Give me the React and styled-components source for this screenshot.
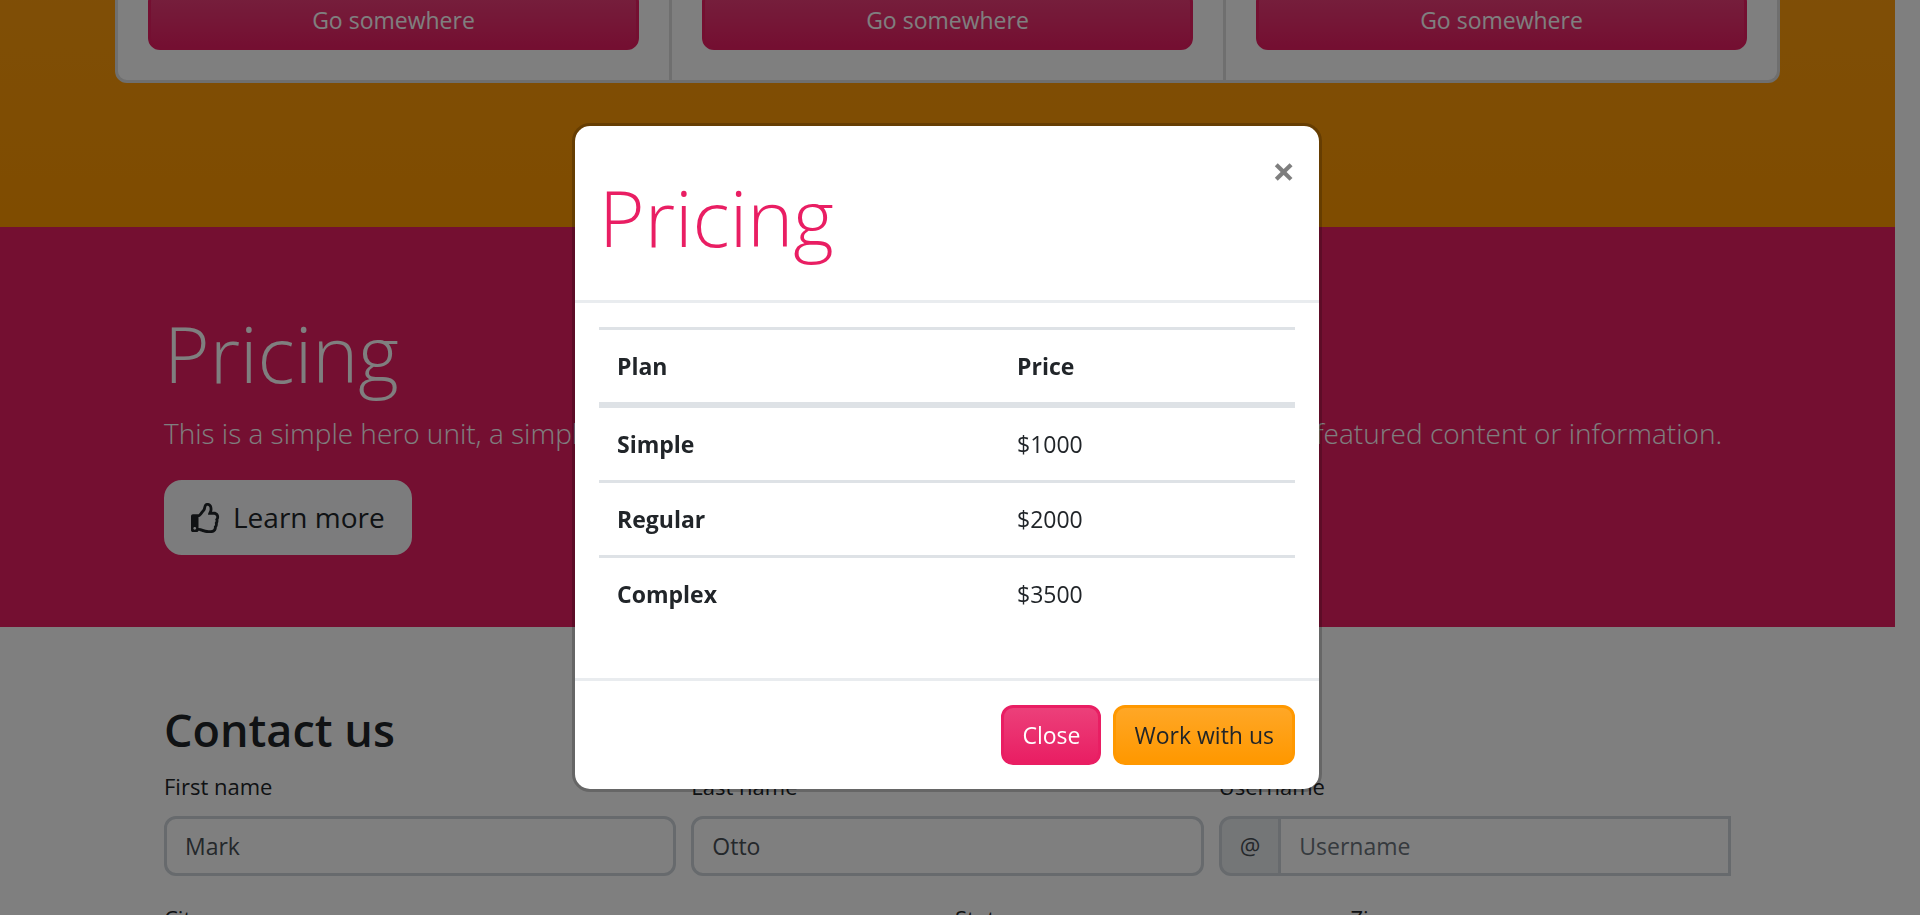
import React from "react";
import styled, { createGlobalStyle, css } from "styled-components";
import { FaRegThumbsUp } from "react-icons/fa";

const GlobalStyle = createGlobalStyle`
  *, *::before, *::after { box-sizing: border-box; }
  body {
    margin: 0;
    overflow: hidden;
    background: #fff;
    color: #212529;
    font-family: "Segoe UI", "Open Sans", "Noto Sans", sans-serif;
    font-size: 23px;
    line-height: 36px;
  }
  h1, h2, p { margin: 0; }
  button, input { font: inherit; }
`;

/* The page sits scrolled part-way through the features section. */
const Page = styled.div`
  margin-top: -43px;
  padding-right: 25px;
`;

const Features = styled.section`
  padding-bottom: 144px;
  background: linear-gradient(#ff9e10, #ff9800);
`;

const CardGroup = styled.div`
  display: flex;
  max-width: 1665px;
  margin: 0 auto;
`;

const Card = styled.article`
  flex: 1 0 0%;
  padding: 30px;
  background: #fff;
  border: 3px solid #dfdfdf;

  & + & { border-left: 0; }
  &:first-child { border-radius: 12px 0 0 12px; }
  &:last-child { border-radius: 0 12px 12px 0; }
`;

const tones = {
  primary: css`
    color: #fff;
    border-color: #e91e63;
    background: #e91e63 linear-gradient(#ec407a, #e91e63) repeat-x;
  `,
  warning: css`
    color: #212529;
    border-color: #ff9800;
    background: #ff9800 linear-gradient(#ffa726, #ff9800) repeat-x;
  `,
  light: css`
    color: #212529;
    border-color: #f8f9fa;
    background: #f8f9fa;
  `,
};

const Button = styled.button`
  display: inline-flex;
  align-items: center;
  justify-content: center;
  width: ${(p) => (p.$block ? "100%" : "auto")};
  padding: ${(p) => (p.$large ? "12px 24px" : "9px 18px")};
  border: 3px solid transparent;
  border-radius: ${(p) => (p.$large ? "18px" : "12px")};
  font-size: ${(p) => (p.$large ? "28px" : "23px")};
  line-height: ${(p) => (p.$large ? "45px" : "36px")};
  text-decoration: none;
  white-space: nowrap;
  cursor: pointer;
  ${(p) => tones[p.$tone]}
`;

const ThumbIcon = styled(FaRegThumbsUp)`
  width: 30px;
  height: 30px;
  margin-right: 12px;
`;

const Container = styled.div`
  max-width: 1567px;
  margin: 0 auto;
`;

const Hero = styled.section`
  padding: 72px 0;
  background: #e91e63;
  color: #fff;
`;

const Display = styled.h1`
  padding-top: 8px;
  font-size: 78px;
  font-weight: 300;
  line-height: 92px;
`;

const Lead = styled.p`
  margin: 12px 0 24px;
  font-size: 28px;
  font-weight: 300;
  line-height: 45px;
  white-space: nowrap;
`;

const Contact = styled.section`
  padding: 72px 0;
`;

const Heading = styled.h2`
  margin-bottom: 12px;
  padding-top: 4px;
  font-size: 45px;
  font-weight: 600;
  line-height: 53px;
`;

const FormGrid = styled.form`
  display: grid;
  grid-template-columns: repeat(12, 1fr);
  gap: 24px 15px;
`;

const Field = styled.div`
  grid-column: span ${(p) => p.$span};
`;

const Label = styled.label`
  display: block;
  margin-bottom: 12px;
  font-size: 22px;
`;

const Input = styled.input`
  display: block;
  flex: 1;
  width: 100%;
  min-width: 0;
  height: 60px;
  padding: 9px 18px;
  border: 3px solid #ced4da;
  border-radius: ${(p) => (p.$grouped ? "0" : "12px")};
  margin-left: ${(p) => (p.$grouped ? "-3px" : "0")};
  background: #fff;
  color: #495057;

  &::placeholder { color: #6c757d; opacity: 1; }
`;

const InputGroup = styled.div`
  display: flex;
`;

const Prefix = styled.span`
  padding: 9px 18px;
  border: 3px solid #ced4da;
  border-radius: 12px 0 0 12px;
  background: #e9ecef;
  color: #495057;
`;

const Backdrop = styled.div`
  position: fixed;
  inset: 0;
  display: flex;
  align-items: center;
  justify-content: center;
  padding-right: 26px;
  background: rgba(0, 0, 0, 0.5);
`;

const Dialog = styled.div`
  width: 750px;
  max-width: 100%;
  border: 3px solid rgba(0, 0, 0, 0.2);
  border-radius: 18px;
  background: #fff;
  background-clip: padding-box;
`;

const DialogHeader = styled.header`
  display: flex;
  align-items: flex-start;
  justify-content: space-between;
  padding: 24px;
  border-bottom: 3px solid #e9ecef;
`;

const DialogTitle = styled(Display)`
  color: #e91e63;
  line-height: 118px;
`;

const CloseIconButton = styled.button`
  margin: -24px;
  padding: 24px;
  border: 0;
  background: none;
  color: #000;
  opacity: 0.5;
  font-size: 40px;
  font-weight: 700;
  line-height: 42px;
  cursor: pointer;
`;

const DialogBody = styled.div`
  padding: 24px;
`;

const PriceTable = styled.table`
  width: 100%;
  margin-bottom: 24px;
  border-spacing: 0;
  table-layout: fixed;
  text-align: left;

  th, td {
    padding: 18px;
    border-top: 3px solid #dee2e6;
  }
  th { font-weight: 700; }
  thead th { border-bottom: 6px solid #dee2e6; }
  thead th:first-child { width: 400px; }
  tbody tr:first-child > * { border-top: 0; }
`;

const DialogFooter = styled.footer`
  display: flex;
  justify-content: flex-end;
  gap: 12px;
  padding: 24px;
  border-top: 3px solid #e9ecef;
`;

const plans = [
  ["Simple", "$1000"],
  ["Regular", "$2000"],
  ["Complex", "$3500"],
];

function TextField({ id, label, span, ...input }) {
  return (
    <Field $span={span}>
      <Label htmlFor={id}>{label}</Label>
      <Input id={id} type="text" {...input} />
    </Field>
  );
}

function PricingDialog() {
  return (
    <Backdrop>
      <Dialog role="dialog" aria-modal="true" aria-labelledby="pricing-title">
        <DialogHeader>
          <DialogTitle id="pricing-title">Pricing</DialogTitle>
          <CloseIconButton type="button" aria-label="Close">×</CloseIconButton>
        </DialogHeader>
        <DialogBody>
          <PriceTable>
            <thead>
              <tr>
                <th scope="col">Plan</th>
                <th scope="col">Price</th>
              </tr>
            </thead>
            <tbody>
              {plans.map(([plan, price]) => (
                <tr key={plan}>
                  <th scope="row">{plan}</th>
                  <td>{price}</td>
                </tr>
              ))}
            </tbody>
          </PriceTable>
        </DialogBody>
        <DialogFooter>
          <Button type="button" $tone="primary">Close</Button>
          <Button type="button" $tone="warning">Work with us</Button>
        </DialogFooter>
      </Dialog>
    </Backdrop>
  );
}

export default function App() {
  return (
    <>
      <GlobalStyle />
      <Page>
        <Features>
          <CardGroup>
            {[1, 2, 3].map((n) => (
              <Card key={n}>
                <Button as="a" href="#" $tone="primary" $block>Go somewhere</Button>
              </Card>
            ))}
          </CardGroup>
        </Features>
        <Hero>
          <Container>
            <Display>Pricing</Display>
            <Lead>
              This is a simple hero unit, a simple jumbotron-style component for calling extra
              attention to featured content or information.
            </Lead>
            <Button type="button" $tone="light" $large>
              <ThumbIcon aria-hidden="true" />
              Learn more
            </Button>
          </Container>
        </Hero>
        <Contact>
          <Container>
            <Heading>Contact us</Heading>
            <FormGrid>
              <TextField id="first-name" label="First name" span={4} defaultValue="Mark" />
              <TextField id="last-name" label="Last name" span={4} defaultValue="Otto" />
              <Field $span={4}>
                <Label htmlFor="username">Username</Label>
                <InputGroup>
                  <Prefix>@</Prefix>
                  <Input id="username" type="text" placeholder="Username" $grouped />
                </InputGroup>
              </Field>
              <TextField id="city" label="City" span={6} />
              <TextField id="state" label="State" span={3} />
              <TextField id="zip" label="Zip" span={3} />
            </FormGrid>
          </Container>
        </Contact>
      </Page>
      <PricingDialog />
    </>
  );
}
